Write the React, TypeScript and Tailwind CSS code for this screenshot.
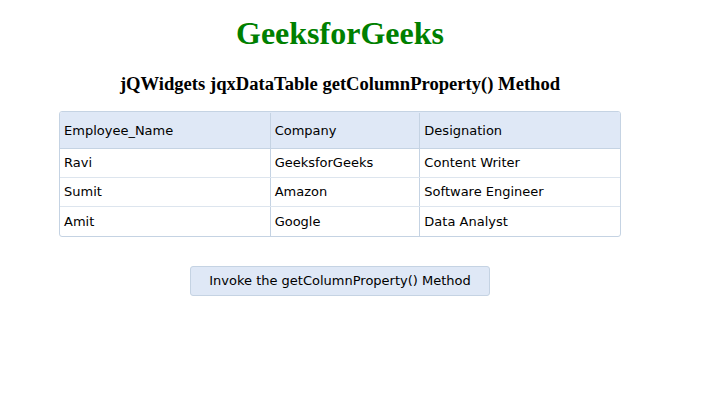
import React from 'react';

const rows = [
  ['Ravi', 'GeeksforGeeks', 'Content Writer'],
  ['Sumit', 'Amazon', 'Software Engineer'],
  ['Amit', 'Google', 'Data Analyst'],
];

const cols = ['Employee_Name', 'Company', 'Designation'];
const widths = ['w-[210px]', 'w-[150px]', 'w-[201px]'];

const App: React.FC = () => {
  return (
    <div className="w-[714px] h-[416px] bg-white overflow-hidden">
      <div className="w-[680px] flex flex-col items-center">
        <h1 className="mt-[15px] text-[32px] leading-[36px] font-bold text-[#008000] font-['Liberation_Serif',serif]">
          GeeksforGeeks
        </h1>
        <h3 className="mt-[22px] text-[18.6px] leading-[22px] font-bold text-black font-['Liberation_Serif',serif]">
          jQWidgets jqxDataTable getColumnProperty() Method
        </h3>
        <div className="mt-[16px] w-[562px] border border-[#c5d3e3] rounded-[3px] overflow-hidden font-['DejaVu_Sans',Verdana,sans-serif] text-[13px] text-black">
          <div className="flex h-[37px] pt-[1px] bg-[#dfe8f6] border-b border-[#c5d3e3]">
            {cols.map((c, i) => (
              <div
                key={c}
                className={`${widths[i]} flex items-center pl-[4px] ${i > 0 ? 'border-l border-[#c5d3e3]' : ''}`}
              >
                {c}
              </div>
            ))}
          </div>
          {rows.map((r, ri) => (
            <div key={ri} className={`flex h-[29px] ${ri < rows.length - 1 ? 'border-b border-[#dde5ee]' : ''}`}>
              {r.map((cell, i) => (
                <div
                  key={i}
                  className={`${widths[i]} flex items-center pl-[4px] ${i > 0 ? 'border-l border-[#c5d3e3]' : ''}`}
                >
                  {cell}
                </div>
              ))}
            </div>
          ))}
        </div>
        <button className="mt-[29px] w-[300px] h-[30px] bg-[#dfe8f6] border border-[#c5d3e3] rounded-[3px] font-['DejaVu_Sans',Verdana,sans-serif] text-[13px] text-black">
          Invoke the getColumnProperty() Method
        </button>
      </div>
    </div>
  );
};

export default App;
